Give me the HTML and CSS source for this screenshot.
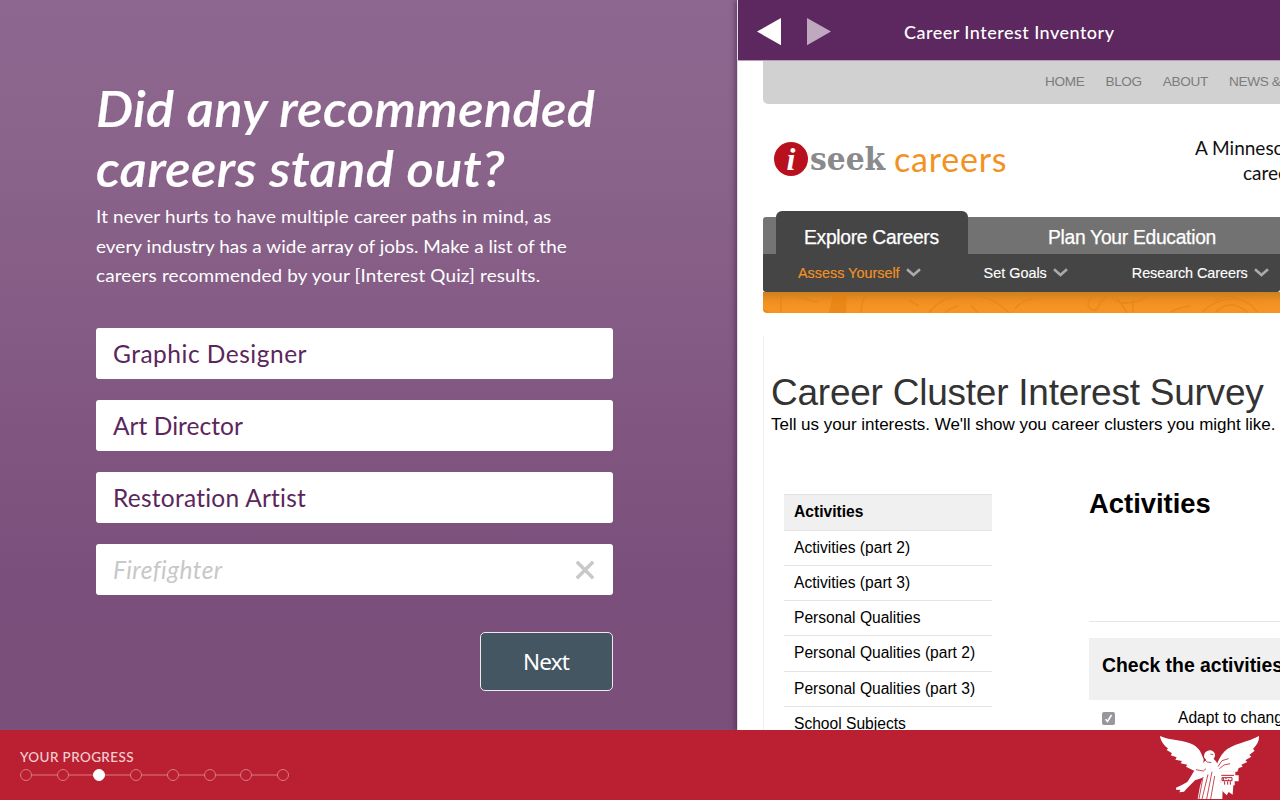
FILE: index.html
```html
<!DOCTYPE html>
<html lang="en">
<head>
<meta charset="utf-8">
<title>Career Interest Inventory</title>
<link rel="stylesheet" href="styles.css">
</head>
<body>
<div class="app">
  <main class="main">
    <section class="question">
      <h1 class="title"><span class="title-a">Did any recommended</span><br><span class="title-b">careers stand out?</span></h1>
      <p class="intro"><span class="in-a">It never hurts to have multiple career paths in mind, as</span><br><span class="in-b">every industry has a wide array of jobs. Make a list of the</span><br><span class="in-c">careers recommended by your [Interest Quiz] results.</span></p>
      <div class="answers">
        <div class="answer"><span class="an-a">Graphic Designer</span></div>
        <div class="answer"><span class="an-b">Art Director</span></div>
        <div class="answer"><span class="an-c">Restoration Artist</span></div>
        <div class="answer answer-draft"><span class="an-d">Firefighter</span>
          <svg class="clear" width="20" height="20" viewBox="0 0 20 20"><path d="M1.8 1.8 18.2 18.2M18.2 1.8 1.8 18.2"/></svg>
        </div>
      </div>
      <button class="next">Next</button>
    </section>

    <section class="browser">
      <header class="browser-bar">
        <svg class="arrows" width="74" height="28" viewBox="0 0 74 28"><path fill="#fff" d="M0 13.6 24 0v27.2z"/><path fill="#bfa9bf" d="M50 0v27.2L74 13.6z"/></svg>
        <span class="browser-title">Career Interest Inventory</span>
      </header>
      <div class="page">
        <nav class="topnav"><span>HOME</span><span>BLOG</span><span>ABOUT</span><span>NEWS &amp;</span></nav>
        <div class="brand">
          <div class="logo"><span class="logo-i">i</span><span class="logo-seek">seek</span><span class="logo-careers">careers</span></div>
          <div class="tagline"><span class="tag-a">A Minnesota</span><span class="tag-b">career</span></div>
        </div>
        <div class="tabs">
          <div class="tab tab-active">Explore Careers</div>
          <div class="tab-strip"><span class="tab-label">Plan Your Education</span></div>
        </div>
        <nav class="subnav">
          <span class="sub sub-a">Assess Yourself<svg class="chev" width="15" height="9" viewBox="0 0 15 9"><path d="M1 1.3 7.5 7 14 1.3"/></svg></span>
          <span class="sub sub-b">Set Goals<svg class="chev" width="15" height="9" viewBox="0 0 15 9"><path d="M1 1.3 7.5 7 14 1.3"/></svg></span>
          <span class="sub sub-c">Research Careers<svg class="chev" width="15" height="9" viewBox="0 0 15 9"><path d="M1 1.3 7.5 7 14 1.3"/></svg></span>
        </nav>
        <div class="ribbon">
          <svg width="518" height="21" viewBox="0 0 518 21" fill="none" stroke="#d97f18" stroke-width="1.6" opacity=".45"><path d="M28 0q10 7 27 10M18 3v18M104 1q-6 8-6 20M0 18l6 3"/><path fill="#e07a0a" stroke="none" d="M70 2h14l-1 19H66z"/><path d="M166 21q10-15 34-19 28 0 46 19M182 21q6-6 14-7M208 13l7 8M146 8l10 6M252 17q8-10 18-10M334 0q-14 12-6 17 6 4 9-6l9-9M352 2l12 19M347 0q3 12 18 11 20-2 20-11M370 8v12M408 20q8-5 20-6M440 20q10-12 32-14 15 3 22 14M452 8q12-6 20-3M453 20q8-8 18-7 8 2 14 8"/></svg>
        </div>
        <div class="survey">
          <h2 class="survey-title">Career Cluster Interest Survey</h2>
          <p class="survey-text">Tell us your interests. We'll show you career clusters you might like.</p>
          <div class="cols">
            <ul class="steps">
              <li class="step step-on">Activities</li>
              <li class="step">Activities (part 2)</li>
              <li class="step">Activities (part 3)</li>
              <li class="step">Personal Qualities</li>
              <li class="step">Personal Qualities (part 2)</li>
              <li class="step">Personal Qualities (part 3)</li>
              <li class="step">School Subjects</li>
            </ul>
            <div class="activities">
              <h3 class="act-title">Activities</h3>
              <div class="act-head">Check the activities</div>
              <div class="act-row"><svg width="13" height="13" viewBox="0 0 13 13"><rect width="13" height="13" rx="2" fill="#98979c"/><path d="M3.5 7.2 5.5 9.5 9.5 3" fill="none" stroke="#fff" stroke-width="1.6"/></svg><span>Adapt to change</span></div>
            </div>
          </div>
        </div>
      </div>
    </section>
  </main>

  <footer class="footer">
    <div class="progress">
      <div class="progress-label">YOUR PROGRESS</div>
      <div class="dots"><i class="dot"></i><i class="dot"></i><i class="dot dot-on"></i><i class="dot"></i><i class="dot"></i><i class="dot"></i><i class="dot"></i><i class="dot"></i></div>
    </div>
    <svg class="eagle" width="120" height="70" viewBox="0 12 360 210">
      <g fill="#fff">
        <path d="M30 30C60 44 105 42 130 56C150 68 154 82 161 100L158 130L132 134L108 122L112 116L92 112L96 105L76 101L80 94L62 88L66 82L50 72L54 67C42 58 32 46 30 30z"/>
        <path d="M327 30C295 48 245 54 224 76C209 92 206 104 198 120L214 137H262L266 126L278 122L274 116L292 108L286 103L304 92L298 87L314 74L309 69C321 56 328 44 327 30z"/>
        <path d="M163 84Q168 73 182 73Q196 77 195 90L191 99L198 106L208 124L214 140L212 170L218 186L217 219H143L150 180L158 155L135 163L112 186L102 197L88 199L91 191L79 192L78 185L94 178L112 168L122 152L134 132L150 122L162 108L168 101L162 94z"/>
        <path d="M210 136H256V148H266V166H254V178H250L248 206L236 198L230 208L212 190z"/>
      </g>
      <g fill="none" stroke="#ba2031" stroke-width="2.4">
        <path d="M164 101L172 108L184 110M138 131L160 135L168 128M159 153L147 219M174 145L156 219M186 137L170 219M194 150L182 219M208 128L222 117L240 113M204 122L216 104L236 98M181 84L190 86"/>
        <path stroke-width="3" d="M214 148H252M216 155H246V164H216zM224 166V176M233 166V176M241 166V176M220 155V164M228 156V160M236 160V164"/>
      </g>
    </svg>
  </footer>
</div>
</body>
</html>
```
FILE: styles.css
```css
* { box-sizing: border-box; }
body { margin: 0; width: 1280px; height: 800px; overflow: hidden; font-family: "Liberation Sans", Arial, sans-serif; }
h1, h2, h3, p, ul { margin: 0; padding: 0; font-weight: 400; }
.app { width: 1280px; height: 800px; display: grid; grid-template-rows: 730px 70px; }
.main { display: grid; grid-template-columns: 737px 543px; min-height: 0; background: linear-gradient(#8e6790 0, #8a648b 150px, #7b4f7b 580px, #7a4f79 730px); }

.question { padding: 79px 124px 0 96px; display: flex; flex-direction: column; color: #fff; font-family: Lato, sans-serif; white-space: nowrap; }
.title { font-size: 50px; line-height: 59.5px; font-style: italic; font-weight: 600; -webkit-text-stroke: .2px #fff; }
.title span, .intro span { display: inline-block; transform: scaleX(1.05); transform-origin: left; }
.title-a { letter-spacing: .4px; }
.title-b { letter-spacing: .4px; }
.intro { margin-top: 4px; font-size: 18px; line-height: 29.7px; }
.in-a { letter-spacing: .13px; }
.in-b { letter-spacing: .05px; }
.in-c { letter-spacing: .14px; }
.answers { margin-top: 37px; display: grid; gap: 21.6px; }
.answer { height: 50.5px; padding: 0 18px 0 17px; display: flex; align-items: center; justify-content: space-between; border-radius: 3px; background: #fff; color: #5b265d; font-size: 24.5px; }
.an-a { letter-spacing: .5px; }
.an-b { letter-spacing: .05px; }
.an-c { letter-spacing: .25px; }
.an-d { letter-spacing: .45px; }
.answer-draft { color: #c8c8c8; }
.answer-draft span { font-style: italic; }
.clear { fill: none; stroke: #c8c8c8; stroke-width: 3.4; }
.next { align-self: flex-end; width: 133px; height: 59px; margin-top: 37px; padding: 0 1px 0 0; border: 1px solid #eee9ef; border-radius: 5px; background: #445662; color: #fff; font: 22.5px "Noto Sans", sans-serif; letter-spacing: -.8px; }

.browser { position: relative; display: grid; grid-template-rows: 61px 1fr; min-width: 0; min-height: 0; overflow: hidden; background: #fff; box-shadow: -2px 0 5px rgba(60, 25, 65, .5); clip-path: inset(0 0 0 -12px); border-left: 1px solid #e5dce5; }
.browser-bar { display: flex; align-items: center; padding: 3px 0 0 19px; background: #5c285f; border-bottom: 1px solid #b79fb8; }
.browser-title { margin-left: 73px; padding-top: 1px; color: #fff; font: 500 18px Lato, sans-serif; letter-spacing: .47px; white-space: nowrap; }
.page { padding-left: 25px; min-height: 0; overflow: hidden; white-space: nowrap; }
.topnav { height: 42.5px; display: flex; gap: 21px; padding: 13px 0 0 282px; border-radius: 0 0 0 5px; background: #d1d1d1; color: #7c7c7c; font-size: 13.6px; letter-spacing: -.34px; }
.brand { height: 107.5px; padding: 31px 0 0 11px; display: flex; }
.logo { flex: none; width: 421px; display: flex; height: 48px; align-items: center; }
.logo-i { width: 34px; height: 34px; border-radius: 50%; background: #b9101e; color: #fff; text-align: center; font: italic 700 32px/34px "Liberation Serif", serif; }
.logo-seek { margin-left: 2px; color: #8a8a8c; font: 700 31px "DejaVu Serif", "Liberation Serif", serif; transform: scaleX(.96); transform-origin: left; width: 77px; }
.logo-careers { margin-left: 7px; color: #f29222; font: 34px Lato, sans-serif; letter-spacing: .8px; }
.tagline { display: grid; align-content: start; grid-auto-rows: 25px; padding-top: 3px; font: 19px/20px Lato, sans-serif; color: #111; }
.tag-b { padding-left: 48px; }
.tabs { height: 43px; display: flex; align-items: flex-end; }
.tabs::before { content: ""; width: 13px; height: 37px; background: #747474; border-radius: 3px 0 0 0; }
.tab-active { width: 192px; height: 43px; border-radius: 6px 6px 0 0; background: #454545; }
.tab { padding-left: 28px; color: #fff; font-size: 19.3px; line-height: 53px; letter-spacing: -.3px; -webkit-text-stroke: .25px #fff; }
.tab-strip { flex: 1; height: 37px; padding-left: 80px; background: #727272; color: #fff; font-size: 19.3px; line-height: 41px; letter-spacing: -.3px; -webkit-text-stroke: .25px #fff; }
.subnav { height: 38px; display: flex; align-items: center; padding-bottom: 1px; background: #454545; border-radius: 0 0 3px 3px; color: #fff; font-size: 14.4px; -webkit-text-stroke: .15px; }
.sub { display: flex; align-items: center; }
.sub-a { margin-left: 35px; color: #f29222; }
.sub-b { margin-left: 63px; }
.sub-c { margin-left: 64px; letter-spacing: -.05px; }
.chev { margin-left: 6px; fill: none; stroke: #aaa; stroke-width: 2.6; }
.ribbon { height: 21px; overflow: hidden; border-radius: 0 0 0 4px; background: linear-gradient(#ce8022, #ee8f20 9px, #f59424 14px); }
.ribbon svg { display: block; }
.survey { margin-top: 23px; height: 400px; padding: 36px 0 0 7px; border-left: 1px solid #eee; }
.survey-title { font-size: 37px; letter-spacing: -.24px; line-height: 42px; color: #333; }
.survey-text { margin-top: 1px; font-size: 17px; letter-spacing: -.03px; line-height: 20px; }
.cols { margin-top: 59px; padding-left: 13px; display: grid; grid-template-columns: 208px 1fr; column-gap: 97px; }
.steps { list-style: none; font-size: 15.6px; }
.step { height: 35.25px; padding-left: 10px; line-height: 34px; border-bottom: 1px solid #e3e3e3; }
.step-on { height: 36.5px; border-top: 1px solid #e3e3e3; background: #f0f0f0; font-weight: 700; }
.act-title { height: 128px; border-bottom: 1px solid #e6e6e6; font-size: 27.4px; line-height: 20px; font-weight: 700; }
.act-head { margin-top: 16px; height: 62px; padding-left: 13px; background: #f0f0f0; font-size: 19.4px; line-height: 54px; font-weight: 700; }
.act-row { height: 36px; padding-left: 13px; display: flex; align-items: center; gap: 63px; font-size: 15.6px; }

.footer { display: flex; justify-content: space-between; background: #ba2031; padding: 0 10px 0 20px; }
.progress { padding-top: 18px; }
.progress-label { height: 21px; color: #f3cfd3; font: 500 13.5px/18px Lato, sans-serif; letter-spacing: .38px; }
.dots { width: 269px; display: flex; justify-content: space-between; background: linear-gradient(#cb4b5a, #cb4b5a) 0 5px / 100% 2px no-repeat; }
.dot { width: 12px; height: 12px; border: 1px solid #d97884; border-radius: 50%; background: #ba2031; }
.dot-on { background: #fff; border-color: #fff; }
```
